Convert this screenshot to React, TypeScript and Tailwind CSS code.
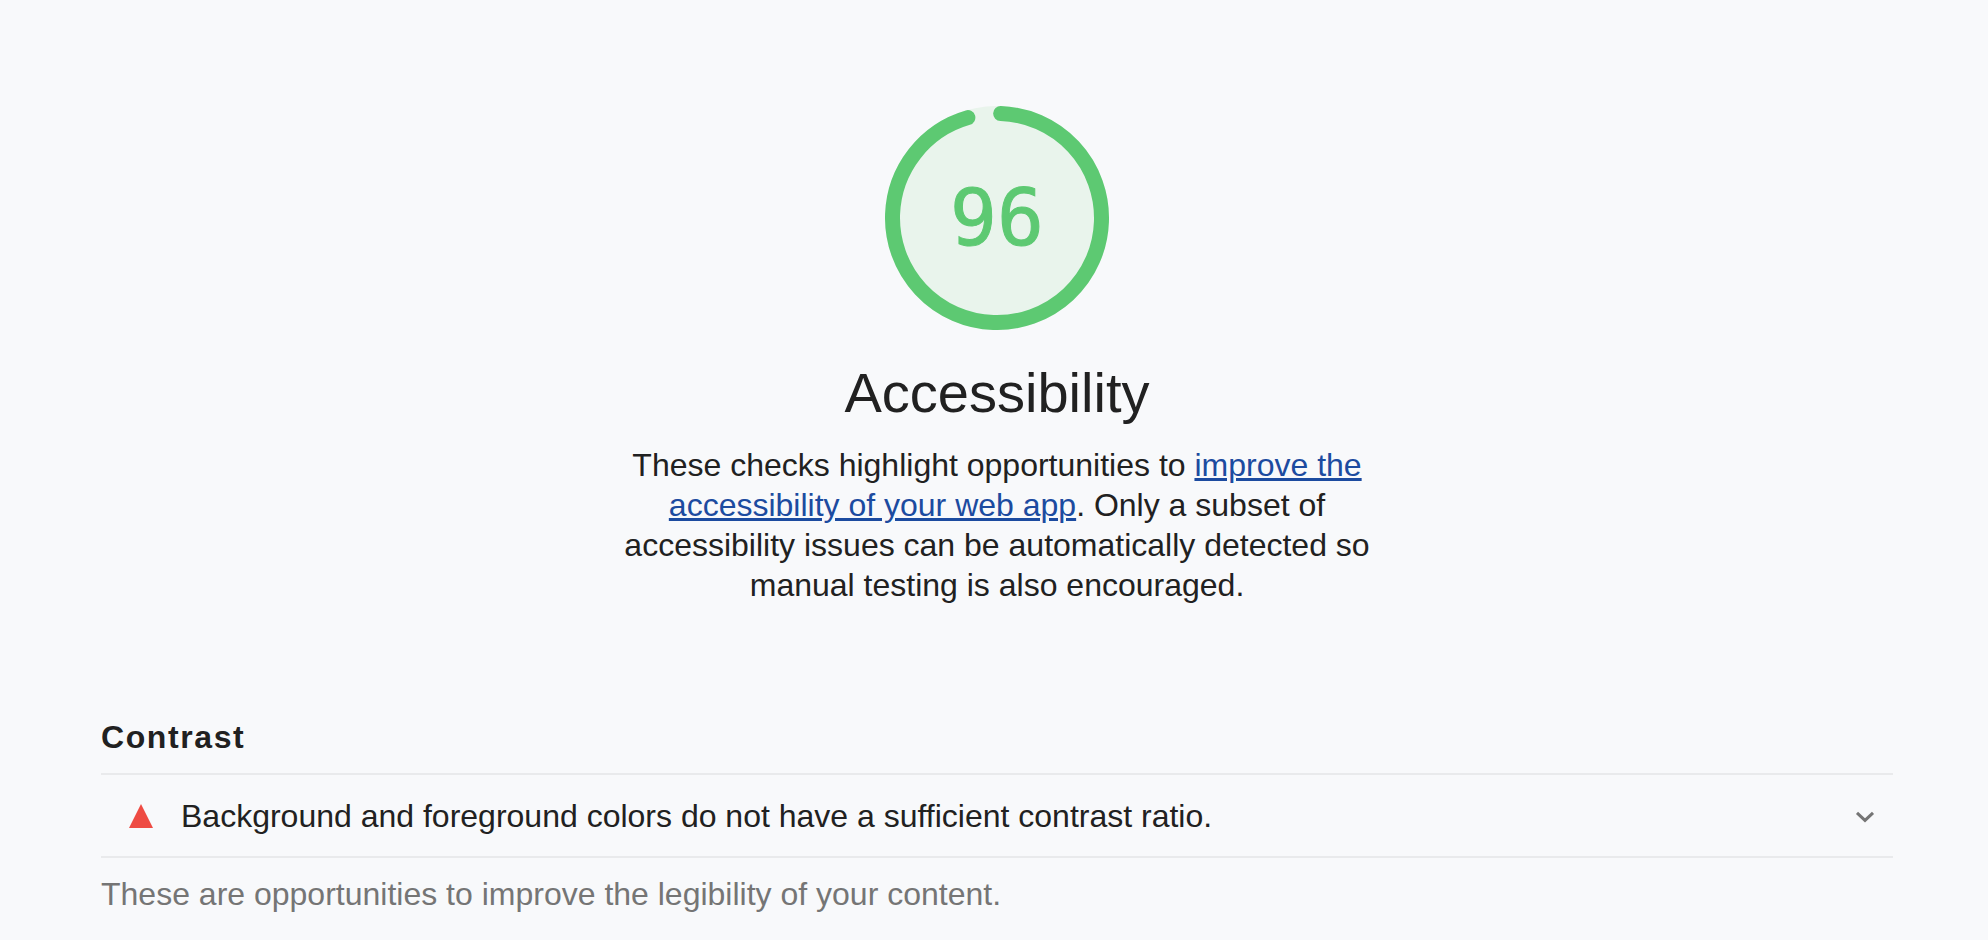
import { useState } from "react";

const SCORE = 96;

function Gauge({ score }: { score: number }) {
  return (
    <div className="relative flex size-56 items-center justify-center">
      <svg viewBox="0 0 224 224" className="absolute inset-0 size-full" aria-hidden="true">
        <circle cx="112" cy="112" r="112" fill="#e9f4ec" />
        <circle
          cx="112"
          cy="112"
          r="104.5"
          fill="none"
          stroke="#5dc972"
          strokeWidth="15"
          strokeLinecap="round"
          pathLength="360"
          strokeDasharray="341.8 360"
          transform="rotate(-88 112 112)"
        />
      </svg>
      <span className="relative font-['DejaVu_Sans_Mono',monospace] text-[78px] leading-none text-[#5dc972] [-webkit-text-stroke:1px_#5dc972]">
        {score}
      </span>
    </div>
  );
}

function AuditRow({ title }: { title: string }) {
  const [open, setOpen] = useState(false);
  return (
    <button
      type="button"
      aria-expanded={open}
      onClick={() => setOpen(!open)}
      className="flex w-full items-center border-y-2 border-[#e9eaec] pt-[21px] pr-4 pb-5 pl-7 text-left"
    >
      <svg viewBox="0 0 24 24" className="mr-7 size-6 shrink-0" aria-hidden="true">
        <path d="M12 0L24 24H0Z" fill="#ee4b43" />
      </svg>
      <span className="flex-1">{title}</span>
      <svg viewBox="0 0 24 24" className="size-6 shrink-0" aria-hidden="true">
        <path d="M4 8.8L12 16.4L20 8.8" fill="none" stroke="#757575" strokeWidth="3" />
      </svg>
    </button>
  );
}

export default function App() {
  return (
    <main className="min-h-screen bg-[#f8f9fb] pt-[106px] pr-[95px] pb-4 pl-[101px] font-['Liberation_Sans',Arial,sans-serif] text-[32px] leading-10 text-[#212121]">
      <header className="flex flex-col items-center text-center">
        <Gauge score={SCORE} />
        <h1 className="mt-[31px] text-[56px] leading-[64px]">Accessibility</h1>
        <p className="mt-5 max-w-[768px]">
          These checks highlight opportunities to{" "}
          <a href="#accessibility" className="text-[#1c4ba0] underline decoration-3">
            improve the accessibility of your web app
          </a>
          . Only a subset of accessibility issues can be automatically detected so manual testing is
          also encouraged.
        </p>
      </header>
      <section className="mt-28">
        <h2 className="mb-4 font-bold tracking-wider">Contrast</h2>
        <AuditRow title="Background and foreground colors do not have a sufficient contrast ratio." />
        <p className="mt-4 text-[#757575]">
          These are opportunities to improve the legibility of your content.
        </p>
      </section>
    </main>
  );
}
